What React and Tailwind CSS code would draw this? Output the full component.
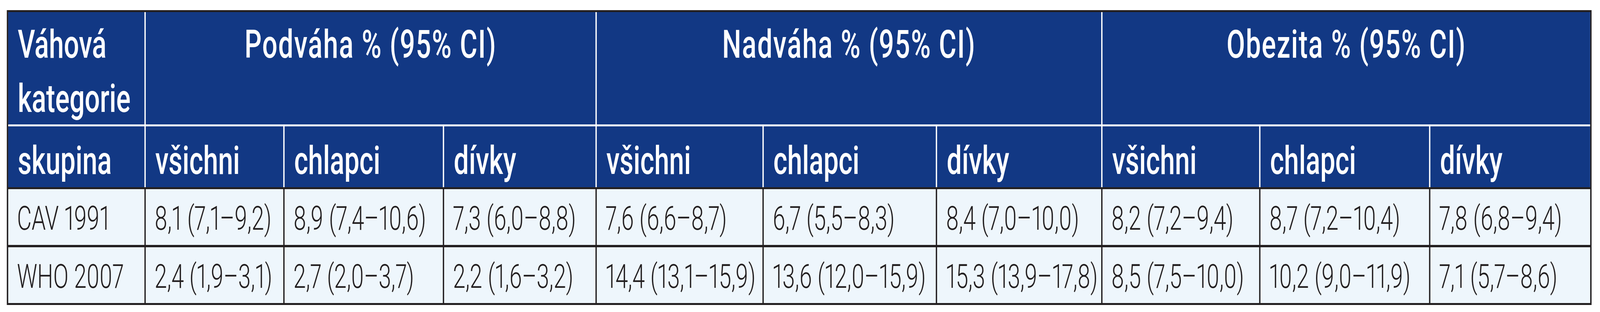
import React, { useLayoutEffect, useState } from "react";

const groups = ["Podváha % (95% CI)", "Nadváha % (95% CI)", "Obezita % (95% CI)"];
const subs = ["všichni", "chlapci", "dívky", "všichni", "chlapci", "dívky", "všichni", "chlapci", "dívky"];
const rows = [
  ["CAV 1991", "8,1 (7,1–9,2)", "8,9 (7,4–10,6)", "7,3 (6,0–8,8)", "7,6 (6,6–8,7)", "6,7 (5,5–8,3)", "8,4 (7,0–10,0)", "8,2 (7,2–9,4)", "8,7 (7,2–10,4)", "7,8 (6,8–9,4)"],
  ["WHO 2007", "2,4 (1,9–3,1)", "2,7 (2,0–3,7)", "2,2 (1,6–3,2)", "14,4 (13,1–15,9)", "13,6 (12,0–15,9)", "15,3 (13,9–17,8)", "8,5 (7,5–10,0)", "10,2 (9,0–11,9)", "7,1 (5,7–8,6)"],
];

const cols = "grid grid-cols-[513px_518px_596px_570px_624px_648px_618px_590px_635px_602px]";

export default function App() {
  // The table is laid out for a 6027px wide frame; fit it to the actual window width.
  const [scale, setScale] = useState(1);
  useLayoutEffect(() => {
    const fit = () => setScale(Math.min(1, window.innerWidth / 6027));
    fit();
    window.addEventListener("resize", fit);
    return () => window.removeEventListener("resize", fit);
  }, []);

  return (
    <div className="w-screen h-[800px] overflow-hidden bg-white">
      <div
        className="w-[6027px] h-[800px] origin-top-left pt-[26px] pl-[26px]"
        style={{ transform: `scaleX(${scale})`, fontFamily: "Roboto, 'Liberation Sans', sans-serif" }}
      >
        <div className="w-[5969px] border-[5px] border-[#231f20] bg-[#231f20]">
          <div className={`${cols} gap-[5px] bg-white text-white font-medium text-[101px]`}>
            <div className="bg-[#123884] h-[288px] pl-[36px] pt-[13px] leading-[139px]">
              Váhová<br />kategorie
            </div>
            {groups.map((g) => (
              <div key={g} className="col-span-3 bg-[#123884] h-[288px] pt-[13px] leading-[139px] text-center whitespace-nowrap tracking-[3px]">
                {g}
              </div>
            ))}
            <div className="bg-[#123884] h-[156px] pl-[36px] pt-[27px] leading-[122px]">skupina</div>
            {subs.map((s, i) => (
              <div key={i} className="bg-[#123884] h-[156px] pl-[36px] pt-[27px] leading-[122px] whitespace-nowrap">
                {s}
              </div>
            ))}
          </div>
          <div className={`${cols} gap-x-[5px] gap-y-[6px] mt-[5px] text-[#231f20] font-light text-[85px] proportional-nums`}>
            {rows.map((r, ri) =>
              r.map((c, ci) => (
                <div key={`${ri}-${ci}`} className="bg-[#eef6fc] h-[143px] pl-[33px] pt-[22px] leading-[106px] whitespace-nowrap">
                  {c}
                </div>
              ))
            )}
          </div>
        </div>
      </div>
    </div>
  );
}
